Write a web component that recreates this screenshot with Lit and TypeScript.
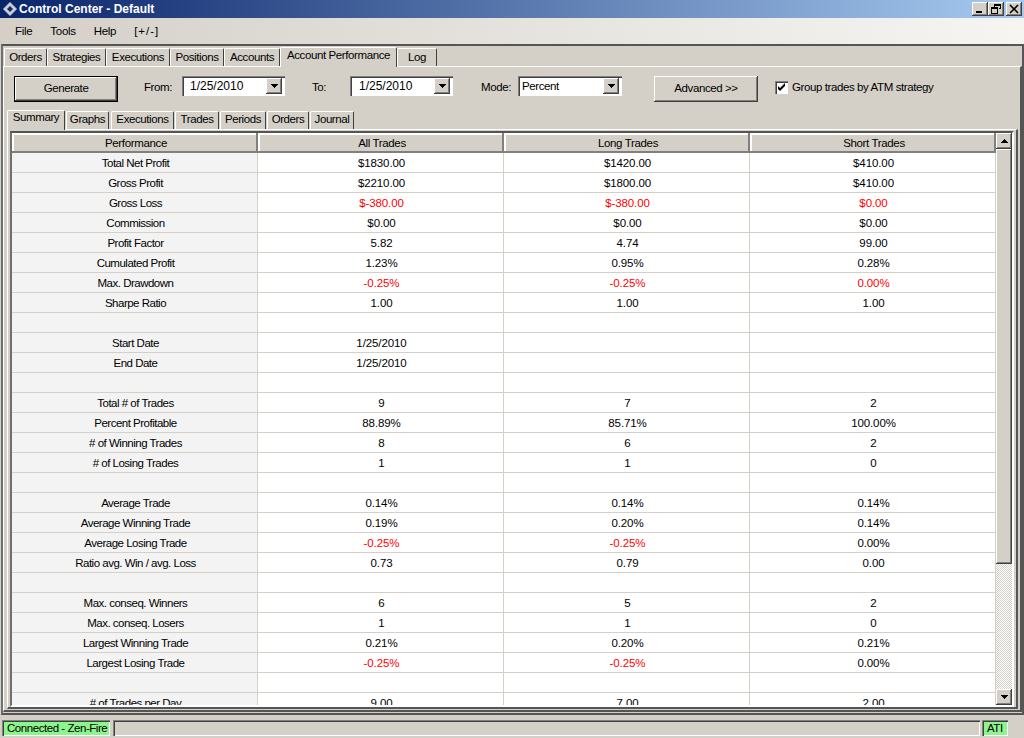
import { LitElement, html, css, svg } from 'lit'
import { customElement } from 'lit/decorators.js'

const outerTabs = [
  ['Orders', 43],
  ['Strategies', 59],
  ['Executions', 64],
  ['Positions', 54],
  ['Accounts', 56],
  ['Account Performance', 117],
  ['Log', 40],
] as const

const innerTabs = [
  ['Summary', 58, 0],
  ['Graphs', 43, 1],
  ['Executions', 63, 2],
  ['Trades', 44, 1],
  ['Periods', 46, 1],
  ['Orders', 42, 1],
  ['Journal', 44, 1],
] as const

// label, all, long, short; a leading "!" marks a red value
const rows = [
  ['Total Net Profit', '$1830.00', '$1420.00', '$410.00'],
  ['Gross Profit', '$2210.00', '$1800.00', '$410.00'],
  ['Gross Loss', '!$-380.00', '!$-380.00', '!$0.00'],
  ['Commission', '$0.00', '$0.00', '$0.00'],
  ['Profit Factor', '5.82', '4.74', '99.00'],
  ['Cumulated Profit', '1.23%', '0.95%', '0.28%'],
  ['Max. Drawdown', '!-0.25%', '!-0.25%', '!0.00%'],
  ['Sharpe Ratio', '1.00', '1.00', '1.00'],
  ['', '', '', ''],
  ['Start Date', '1/25/2010', '', ''],
  ['End Date', '1/25/2010', '', ''],
  ['', '', '', ''],
  ['Total # of Trades', '9', '7', '2'],
  ['Percent Profitable', '88.89%', '85.71%', '100.00%'],
  ['# of Winning Trades', '8', '6', '2'],
  ['# of Losing Trades', '1', '1', '0'],
  ['', '', '', ''],
  ['Average Trade', '0.14%', '0.14%', '0.14%'],
  ['Average Winning Trade', '0.19%', '0.20%', '0.14%'],
  ['Average Losing Trade', '!-0.25%', '!-0.25%', '0.00%'],
  ['Ratio avg. Win / avg. Loss', '0.73', '0.79', '0.00'],
  ['', '', '', ''],
  ['Max. conseq. Winners', '6', '5', '2'],
  ['Max. conseq. Losers', '1', '1', '0'],
  ['Largest Winning Trade', '0.21%', '0.20%', '0.21%'],
  ['Largest Losing Trade', '!-0.25%', '!-0.25%', '0.00%'],
  ['', '', '', ''],
  ['# of Trades per Day', '9.00', '7.00', '2.00'],
]

const arrowDown = svg`<path d="M0 0h7v1H6v1H5v1H4v1H3V3H2V2H1V1H0z" fill="#000"/>`
const arrowUp = svg`<path d="M3 0h1v1h1v1h1v1h1v1H0V3h1V2h1V1h1z" fill="#000"/>`

@customElement('app-root')
export class AppRoot extends LitElement {
  static styles = css`
    :host {
      display: block;
      width: 1024px;
      height: 738px;
      overflow: hidden;
      background: #d4d0c8;
      color: #000;
      font: 11.5px 'Liberation Sans', Arial, sans-serif;
      letter-spacing: -0.4px;
    }
    .app {
      display: flex;
      flex-direction: column;
      height: 738px;
    }
    .titlebar {
      flex: none;
      height: 18px;
      display: flex;
      align-items: center;
      padding: 0 2px 0 3px;
      background: linear-gradient(90deg, #0a246a, #a6caf0);
      color: #fff;
      font: bold 12px 'Liberation Sans', Arial, sans-serif;
      letter-spacing: 0;
    }
    .titlebar .logo {
      width: 14px;
      height: 14px;
      margin-right: 2px;
    }
    .titlebar .name {
      flex: 1;
    }
    .winbtn {
      width: 16px;
      height: 14px;
      background: #d4d0c8;
      box-shadow: inset -1px -1px #404040, inset 1px 1px #fff, inset -2px -2px #808080;
      display: flex;
    }
    .winbtn + .winbtn.gap {
      margin-left: 2px;
    }
    .menubar {
      flex: none;
      height: 25px;
      display: flex;
      align-items: center;
      gap: 18px;
      padding: 0 0 1px 15px;
      background: linear-gradient(90deg, #d4d0c8, #f6f5f2);
      letter-spacing: -0.3px;
    }
    .menubar .toggle {
      letter-spacing: 1px;
    }
    .frame {
      flex: none;
      height: 671px;
      box-sizing: border-box;
      margin-left: 1px;
      border-top: 2px solid #555;
      border-left: 2px solid #707070;
      border-right: 2px solid #555;
      border-bottom: 2px solid #555;
      display: flex;
      flex-direction: column;
      padding-bottom: 1px;
    }
    .tabs {
      flex: none;
      display: flex;
      align-items: flex-end;
    }
    .outer {
      height: 20px;
      padding-left: 1px;
    }
    .tab {
      flex: none;
      box-sizing: border-box;
      height: 18px;
      text-align: center;
      line-height: 16px;
      white-space: nowrap;
      border-top: 1px solid #fff;
      border-left: 1px solid #fff;
      border-right: 1px solid #404040;
      border-radius: 2px 2px 0 0;
    }
    .tab.active {
      height: 20px;
      line-height: 15px;
      margin-bottom: -1px;
      background: #d4d0c8;
      position: relative;
    }
    .inner .tab {
      line-height: 14px;
    }
    .inner .tab.active {
      line-height: 13px;
    }
    .page {
      flex: 1;
      min-height: 0;
      border-top: 1px solid #fff;
      border-left: 1px solid #fff;
      border-right: 2px solid #555;
      border-bottom: 2px solid #555;
      display: flex;
      flex-direction: column;
      padding: 0 2px 1px 3px;
    }
    .controls {
      flex: none;
      height: 41px;
      box-sizing: border-box;
      padding: 9px 0 0 7px;
      display: flex;
      align-items: flex-start;
    }
    .button {
      box-sizing: border-box;
      width: 104px;
      height: 26px;
      line-height: 25px;
      text-align: center;
      background: #d4d0c8;
      box-shadow: inset -1px -1px #404040, inset 1px 1px #fff, inset -2px -2px #808080;
    }
    .button.default {
      border: 1px solid #000;
      line-height: 23px;
    }
    .label {
      line-height: 22px;
    }
    .combo {
      box-sizing: border-box;
      height: 20px;
      background: #fff;
      box-shadow: inset 1px 1px #808080, inset 2px 2px #404040, inset -1px -1px #fff;
      display: flex;
      align-items: center;
      justify-content: space-between;
      padding: 2px 3px 2px 2px;
    }
    .combo span {
      font-size: 12px;
      line-height: 15px;
      letter-spacing: 0;
    }
    .combo span.word {
      font-size: 11.5px;
      letter-spacing: -0.4px;
    }
    .dropbtn {
      width: 16px;
      height: 16px;
      background: #d4d0c8;
      box-shadow: inset -1px -1px #404040, inset 1px 1px #fff, inset -2px -2px #808080;
      display: flex;
      align-items: center;
      justify-content: center;
    }
    .check {
      display: flex;
      align-items: center;
      margin-left: 17px;
      height: 26px;
      margin-top: -2px;
    }
    .check .box {
      width: 13px;
      height: 13px;
      margin-right: 4px;
      display: flex;
      background: #fff;
      box-shadow: inset 1px 1px #808080, inset 2px 2px #404040;
    }
    .inner {
      height: 21px;
    }
    .subpage {
      flex: 1;
      min-height: 0;
      border-top: 1px solid #fff;
      border-left: 1px solid #fff;
      border-right: 2px solid #555;
      border-bottom: 2px solid #555;
      padding: 1px 2px 0 2px;
    }
    .gridwrap {
      display: flex;
      height: 576px;
      box-sizing: border-box;
      border: 2px solid;
      border-color: #555 #fff #fff #707070;
    }
    .grid {
      flex: none;
      width: 984px;
      overflow: hidden;
      background: #fff;
      display: grid;
      grid-template-columns: repeat(4, 246px);
      grid-auto-rows: 20px;
    }
    .cell {
      box-sizing: border-box;
      padding-left: 2px;
      text-align: center;
      line-height: 21px;
      letter-spacing: -0.1px;
      white-space: nowrap;
      border-right: 1px solid #d4d0c8;
      border-bottom: 1px solid #d4d0c8;
    }
    .cell.rowhead {
      background: #f3f3f3;
      letter-spacing: -0.5px;
    }
    .cell.red {
      color: #f00;
    }
    .cell.head {
      background: #d4d0c8;
      border: 0;
      line-height: 21px;
      letter-spacing: -0.35px;
      box-shadow: inset -2px -2px #808080, inset 2px 2px #fff;
    }
    .scroll {
      flex: none;
      width: 16px;
      display: flex;
      flex-direction: column;
      background: #fff conic-gradient(#d4d0c8 25%, #fff 0 50%, #d4d0c8 0 75%, #fff 0) 0 0 / 2px 2px;
    }
    .sbtn {
      flex: none;
      height: 16px;
      background: #d4d0c8;
      box-shadow: inset -1px -1px #404040, inset 1px 1px #fff, inset -2px -2px #808080;
      display: flex;
      align-items: center;
      justify-content: center;
    }
    .thumb {
      flex: none;
      height: 415px;
      background: #d4d0c8;
      box-shadow: inset -1px -1px #404040, inset 1px 1px #fff, inset -2px -2px #808080;
    }
    .track {
      flex: 1;
    }
    .statusbar {
      flex: 1;
      display: flex;
      padding: 5px 16px 0 2px;
      gap: 3px;
    }
    .pane {
      box-sizing: border-box;
      height: 16px;
      line-height: 17px;
      white-space: nowrap;
      letter-spacing: -0.45px;
      box-shadow: inset 1px 1px #808080, inset 2px 2px #404040, inset -1px -1px #fff;
    }
    .pane.ok {
      background: #8cf58c;
      padding-left: 5px;
    }
    .pane.fill {
      flex: 1;
      margin-right: -1px;
    }
  `

  private tab(label: string, width: number, active: boolean, gap = 0) {
    return html`<div class="tab ${active ? 'active' : ''}" style="width:${width}px;margin-left:${gap}px">${label}</div>`
  }

  private combo(text: string, width: number, pad: number, word = false) {
    return html`<div class="combo" style="width:${width}px">
      <span class=${word ? 'word' : ''} style="padding-left:${pad}px">${text}</span>
      <div class="dropbtn"><svg width="7" height="4" viewBox="0 0 7 4">${arrowDown}</svg></div>
    </div>`
  }

  private cell(value: string, index: number) {
    const red = value.startsWith('!')
    const cls = `cell ${index === 0 ? 'rowhead' : ''} ${red ? 'red' : ''}`
    return html`<div class=${cls}>${red ? value.slice(1) : value}</div>`
  }

  render() {
    return html`<div class="app">
      <div class="titlebar">
        <svg class="logo" viewBox="0 0 14 14">
          <path d="M7 0l7 7-7 7-7-7z" fill="#c8ccd8" />
          <path d="M7 4l3 3-3 3-3-3z" fill="#1c2c60" />
        </svg>
        <span class="name">Control Center - Default</span>
        <div class="winbtn">
          <svg width="16" height="14" viewBox="0 0 16 14"><path d="M4 9h6v2H4z" fill="#000" /></svg>
        </div>
        <div class="winbtn">
          <svg width="16" height="14" viewBox="0 0 16 14">
            <path d="M6 2h7v5h-2V6h1V4H7v1H6zM3 5h7v7H3zm1 2v4h5V7z" fill="#000" fill-rule="evenodd" />
          </svg>
        </div>
        <div class="winbtn gap">
          <svg width="16" height="14" viewBox="0 0 16 14">
            <path d="M4 3l8 8M12 3l-8 8" stroke="#000" stroke-width="1.6" fill="none" />
          </svg>
        </div>
      </div>
      <div class="menubar">
        <span>File</span><span>Tools</span><span>Help</span><span class="toggle">[+/-]</span>
      </div>
      <div class="frame">
        <div class="tabs outer">
          ${outerTabs.map(([l, w]) => this.tab(l, w, l === 'Account Performance'))}
        </div>
        <div class="page">
          <div class="controls">
            <div class="button default">Generate</div>
            <span class="label" style="margin-left:26px;width:38px">From:</span>
            ${this.combo('1/25/2010', 103, 6)}
            <span class="label" style="margin-left:27px;width:38px">To:</span>
            ${this.combo('1/25/2010', 103, 7)}
            <span class="label" style="margin-left:28px;width:37px">Mode:</span>
            ${this.combo('Percent', 104, 2, true)}
            <div class="button" style="margin-left:32px">Advanced &gt;&gt;</div>
            <div class="check">
              <div class="box">
                <svg width="13" height="13" viewBox="0 0 13 13">
                  <path d="M3 5l2 2 5-5v3l-5 5-2-2z" fill="#000" />
                </svg>
              </div>
              <span>Group trades by ATM strategy</span>
            </div>
          </div>
          <div class="tabs inner">
            ${innerTabs.map(([l, w, g]) => this.tab(l, w, l === 'Summary', g))}
          </div>
          <div class="subpage">
            <div class="gridwrap">
              <div class="grid">
                <div class="cell head">Performance</div>
                <div class="cell head">All Trades</div>
                <div class="cell head">Long Trades</div>
                <div class="cell head">Short Trades</div>
                ${rows.map((r) => r.map((v, i) => this.cell(v, i)))}
              </div>
              <div class="scroll">
                <div class="sbtn"><svg width="7" height="4" viewBox="0 0 7 4">${arrowUp}</svg></div>
                <div class="thumb"></div>
                <div class="track"></div>
                <div class="sbtn"><svg width="7" height="4" viewBox="0 0 7 4">${arrowDown}</svg></div>
              </div>
            </div>
          </div>
        </div>
      </div>
      <div class="statusbar">
        <div class="pane ok" style="width:108px">Connected - Zen-Fire</div>
        <div class="pane fill"></div>
        <div class="pane ok" style="width:26px">ATI</div>
      </div>
    </div>`
  }
}
